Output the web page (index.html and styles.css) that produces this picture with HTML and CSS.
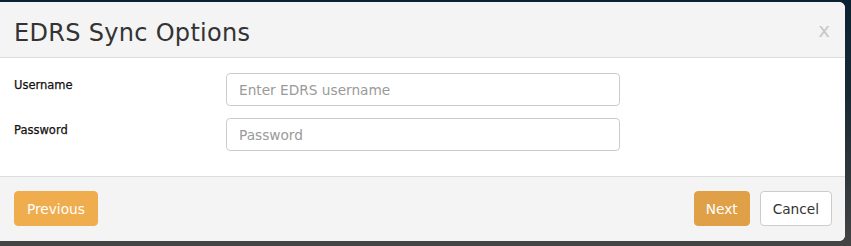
FILE: index.html
```html
<!DOCTYPE html>
<html>
<head>
<meta charset="utf-8">
<link rel="stylesheet" href="styles.css">
</head>
<body>
<div class="modal">
  <div class="modal-header">
    <h4 class="modal-title">EDRS Sync Options</h4>
    <span class="close">x</span>
  </div>
  <div class="modal-body">
    <div class="form-row">
      <label class="control-label">Username</label>
      <input class="form-control" type="text" placeholder="Enter EDRS username">
    </div>
    <div class="form-row">
      <label class="control-label">Password</label>
      <input class="form-control" type="password" placeholder="Password">
    </div>
  </div>
  <div class="modal-footer">
    <button class="btn btn-warning">Previous</button>
    <div class="spacer"></div>
    <button class="btn btn-warning btn-active">Next</button>
    <button class="btn btn-default">Cancel</button>
  </div>
</div>
</body>
</html>
```
FILE: styles.css
```css
html, body {
  margin: 0;
  padding: 0;
}
body {
  width: 851px;
  height: 246px;
  overflow: hidden;
  background: linear-gradient(#0b2232 0, #1a2a34 40%, #444 100%);
  font-family: "DejaVu Sans", sans-serif;
  color: #333;
}
.modal {
  margin-top: 2px;
  margin-left: -6px;
  width: 851px;
  background: #fff;
  border-radius: 6px;
  overflow: hidden;
}
.modal-header {
  background: #f4f4f4;
  height: 55px;
  border-bottom: 1px solid #dddddd;
  display: flex;
  align-items: center;
  padding: 0 14px 0 20px;
  box-sizing: content-box;
}
.modal-title {
  margin: 0;
  flex: 1;
  font-size: 24px;
  font-weight: normal;
  color: #333;
  padding-top: 7px;
  letter-spacing: 0.3px;
}
.close {
  color: #c8c8c8;
  font-size: 20px;
  margin-right: 1px;
  margin-top: 0;
}
.modal-body {
  padding: 15px 0 14px 20px;
  height: 89px;
}
.form-row {
  display: grid;
  grid-template-columns: 212px 394px;
  margin-bottom: 12px;
}
.control-label {
  font-size: 11.5px;
  font-weight: normal;
  padding-top: 5px;
  color: #111;
  -webkit-text-stroke: 0.25px #111;
}
.form-control {
  box-sizing: border-box;
  height: 33px;
  border: 1px solid #cccccc;
  border-radius: 4px;
  padding: 0 12px;
  font-family: "DejaVu Sans", sans-serif;
  font-size: 13.7px;
  color: #555;
  background: #fff;
  margin: 0;
}
.form-control::placeholder {
  color: #9a9a9a;
}
.modal-footer {
  background: #f4f4f4;
  border-top: 1px solid #dddddd;
  display: flex;
  align-items: center;
  padding: 14px 13px 15px 20px;
  gap: 10px;
}
.spacer {
  flex: 1;
}
.btn {
  height: 35px;
  border-radius: 4px;
  font-family: "DejaVu Sans", sans-serif;
  font-size: 13.7px;
  padding: 0 12px;
  border: 1px solid transparent;
  margin: 0;
}
.btn-warning {
  background: #f0ad4e;
  color: #fff;
  border-color: #f0ad4e;
}
.btn-active {
  background: #e0a048;
  border-color: #e0a048;
  padding: 0 11px;
}
.btn-default {
  background: #fff;
  color: #333;
  border-color: #cccccc;
}
```
